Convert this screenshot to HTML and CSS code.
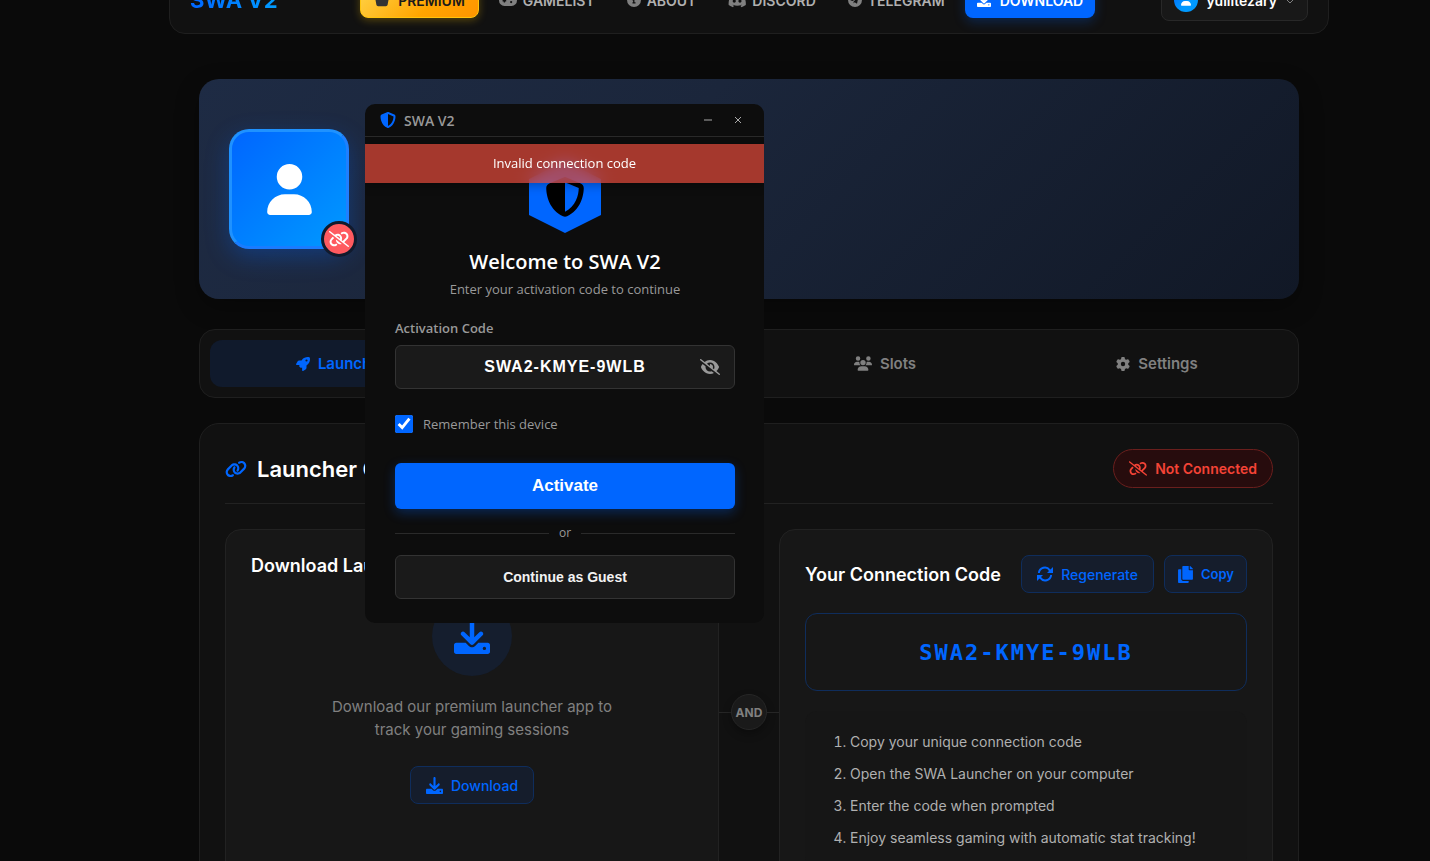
FILE: index.html
```html
<!DOCTYPE html>
<html lang="en">
<head>
<meta charset="utf-8">
<meta name="viewport" content="width=device-width, initial-scale=1">
<title>SWA V2</title>
<link rel="stylesheet" href="styles.css">
</head>
<body>
<svg class="sprite" aria-hidden="true">
  <symbol id="i-user" viewBox="0 0 448 512"><path d="M224 256A128 128 0 1 0 224 0a128 128 0 1 0 0 256zm-45.7 48C79.8 304 0 383.8 0 482.3C0 498.7 13.3 512 29.7 512H418.3c16.4 0 29.7-13.3 29.7-29.7C448 383.8 368.2 304 269.7 304H178.3z"/></symbol>
  <symbol id="i-unlink" viewBox="0 0 640 512"><path d="M38.8 5.1C28.4-3.1 13.3-1.2 5.1 9.2S-1.2 34.7 9.2 42.9l592 464c10.4 8.2 25.5 6.3 33.7-4.1s6.3-25.5-4.1-33.7L489.3 358.2l90.5-90.5c56.5-56.5 56.5-148 0-204.5c-50-50-128.8-56.5-186.3-15.4l-1.6 1.1c-14.4 10.3-17.7 30.3-7.4 44.6s30.3 17.7 44.6 7.4l1.6-1.1c32.1-22.9 76-19.3 103.8 8.6c31.5 31.5 31.5 82.5 0 114l-96 96-31.9-25C430.9 239.6 420.1 175.1 377 132c-52.2-52.3-134.5-56.2-191.3-11.7L38.8 5.1zM239 162c30.1-14.9 67.7-9.9 92.8 15.3c20 20 27.5 48.3 21.7 74.5L239 162zM406.6 416.4L220.9 270c-2.1 39.8 12.2 80.1 42.2 110c38.9 38.9 94.4 51 143.6 36.3zm-290-228.5L60.2 244.3c-56.5 56.5-56.5 148 0 204.5c50 50 128.8 56.5 186.3 15.4l1.6-1.1c14.4-10.3 17.7-30.3 7.4-44.6s-30.3-17.7-44.6-7.4l-1.6 1.1c-32.1 22.9-76 19.3-103.8-8.6C74 372 74 321 105.5 289.5l61.8-61.8-50.6-39.9z"/></symbol>
  <symbol id="i-link" viewBox="0 0 640 512"><path d="M579.8 267.7c56.5-56.5 56.5-148 0-204.5c-50-50-128.8-56.5-186.3-15.4l-1.6 1.1c-14.4 10.3-17.7 30.3-7.4 44.6s30.3 17.7 44.6 7.4l1.6-1.1c32.1-22.9 76-19.3 103.8 8.6c31.5 31.5 31.5 82.5 0 114L422.3 334.8c-31.5 31.5-82.5 31.5-114 0c-27.9-27.9-31.5-71.8-8.6-103.8l1.1-1.6c10.3-14.4 6.9-34.4-7.4-44.6s-34.4-6.9-44.6 7.4l-1.1 1.6C206.5 251.2 213 330 263 380c56.5 56.5 148 56.5 204.5 0L579.8 267.7zM60.2 244.3c-56.5 56.5-56.5 148 0 204.5c50 50 128.8 56.5 186.3 15.4l1.6-1.1c14.4-10.3 17.7-30.3 7.4-44.6s-30.3-17.7-44.6-7.4l-1.6 1.1c-32.1 22.9-76 19.3-103.8-8.6C74 372 74 321 105.5 289.5L217.7 177.2c31.5-31.5 82.5-31.5 114 0c27.9 27.9 31.5 71.8 8.6 103.9l-1.1 1.6c-10.3 14.4-6.9 34.4 7.4 44.6s34.4 6.9 44.6-7.4l1.1-1.6C433.5 260.8 427 182 377 132c-56.5-56.5-148-56.5-204.5 0L60.2 244.3z"/></symbol>
  <symbol id="i-rocket" viewBox="0 0 512 512"><path d="M156.6 384.9L125.7 354c-8.5-8.5-11.5-20.8-7.7-32.2c3-8.9 7-20.5 11.8-33.8L24 288c-8.6 0-16.6-4.6-20.9-12.1s-4.2-16.7 .2-24.1l52.5-88.5c13-21.9 36.5-35.3 61.9-35.3l82.3 0c2.4-4 4.8-7.7 7.2-11.3C289.1-4.1 411.1-8.1 483.9 5.3c11.6 2.1 20.6 11.2 22.8 22.8c13.4 72.9 9.3 194.8-111.4 276.7c-3.5 2.4-7.3 4.8-11.3 7.2v82.3c0 25.4-13.4 49-35.3 61.9l-88.5 52.5c-7.4 4.4-16.6 4.5-24.1 .2s-12.1-12.2-12.1-20.9V380.8c-14.1 4.9-26.4 8.9-35.7 11.9c-11.2 3.6-23.4 .5-31.8-7.8zM384 168a40 40 0 1 0 0-80 40 40 0 1 0 0 80z"/></symbol>
  <symbol id="i-users" viewBox="0 0 640 512"><path d="M144 0a80 80 0 1 1 0 160A80 80 0 1 1 144 0zM512 0a80 80 0 1 1 0 160A80 80 0 1 1 512 0zM0 298.7C0 239.8 47.8 192 106.7 192h42.7c15.9 0 31 3.5 44.6 9.7c-1.3 7.2-1.9 14.7-1.9 22.3c0 38.2 16.8 72.5 43.3 96c-.2 0-.4 0-.7 0H21.3C9.6 320 0 310.4 0 298.7zM405.3 320c-.2 0-.4 0-.7 0c26.6-23.5 43.3-57.8 43.3-96c0-7.6-.7-15-1.9-22.3c13.6-6.3 28.7-9.7 44.6-9.7h42.7C592.2 192 640 239.8 640 298.7c0 11.8-9.6 21.3-21.3 21.3H405.3zM224 224a96 96 0 1 1 192 0 96 96 0 1 1 -192 0zM128 485.3C128 411.7 187.7 352 261.3 352H378.7C452.3 352 512 411.7 512 485.3c0 14.7-11.9 26.7-26.7 26.7H154.7c-14.7 0-26.7-11.9-26.7-26.7z"/></symbol>
  <symbol id="i-gear" viewBox="0 0 512 512"><path d="M495.9 166.6c3.2 8.7 .5 18.4-6.4 24.6l-43.3 39.4c1.1 8.3 1.7 16.8 1.7 25.4s-.6 17.1-1.7 25.4l43.3 39.4c6.9 6.2 9.6 15.9 6.4 24.6c-4.4 11.9-9.7 23.3-15.8 34.3l-4.7 8.1c-6.6 11-14 21.4-22.1 31.2c-5.9 7.2-15.7 9.6-24.5 6.8l-55.7-17.7c-13.4 10.3-28.2 18.9-44 25.4l-12.5 57.1c-2 9.1-9 16.3-18.2 17.8c-13.8 2.3-28 3.5-42.5 3.5s-28.7-1.2-42.5-3.5c-9.2-1.5-16.2-8.7-18.2-17.8l-12.5-57.1c-15.8-6.5-30.6-15.1-44-25.4L83.1 425.9c-8.8 2.8-18.6 .3-24.5-6.8c-8.1-9.8-15.5-20.2-22.1-31.2l-4.7-8.1c-6.1-11-11.4-22.4-15.8-34.3c-3.2-8.7-.5-18.4 6.4-24.6l43.3-39.4C64.6 273.1 64 264.6 64 256s.6-17.1 1.7-25.4L22.4 191.2c-6.9-6.2-9.6-15.9-6.4-24.6c4.4-11.9 9.7-23.3 15.8-34.3l4.7-8.1c6.6-11 14-21.4 22.1-31.2c5.9-7.2 15.7-9.6 24.5-6.8l55.7 17.7c13.4-10.3 28.2-18.9 44-25.4l12.5-57.1c2-9.1 9-16.3 18.2-17.8C227.3 1.2 241.5 0 256 0s28.7 1.2 42.5 3.5c9.2 1.5 16.2 8.7 18.2 17.8l12.5 57.1c15.8 6.5 30.6 15.1 44 25.4l55.7-17.7c8.8-2.8 18.6-.3 24.5 6.8c8.1 9.8 15.5 20.2 22.1 31.2l4.7 8.1c6.1 11 11.4 22.4 15.8 34.3zM256 336a80 80 0 1 0 0-160 80 80 0 1 0 0 160z"/></symbol>
  <symbol id="i-shield" viewBox="0 0 512 512"><path d="M256 0c4.6 0 9.2 1 13.4 2.9L457.7 82.8c22 9.3 38.4 31 38.3 57.2c-.5 99.2-41.3 280.7-213.6 363.2c-16.7 8-36.1 8-52.8 0C57.3 420.7 16.5 239.2 16 140c-.1-26.2 16.3-47.9 38.3-57.2L242.7 2.9C246.8 1 251.4 0 256 0zm0 66.8V444.8C394 378 431.1 230.1 432 141.4L256 66.8z"/></symbol>
  <symbol id="i-rotate" viewBox="0 0 16 16"><path d="M16 1v6h-6l2-2a5 5 0 0 0-9.200 2H.9A7 7 0 0 1 13.500 3.400zM0 15V9h6l-2 2a5 5 0 0 0 9.200-2h1.900A7 7 0 0 1 2.500 12.600z"/></symbol>
  <symbol id="i-copy" viewBox="0 0 448 512"><path d="M320 448v40c0 13.255-10.745 24-24 24H24c-13.255 0-24-10.745-24-24V120c0-13.255 10.745-24 24-24h72v296c0 30.879 25.121 56 56 56h168zm0-344V0H152c-13.255 0-24 10.745-24 24v368c0 13.255 10.745 24 24 24h272c13.255 0 24-10.745 24-24V128H344c-13.2 0-24-10.8-24-24zm120.971-31.029L375.029 7.029A24 24 0 0 0 358.059 0H352v96h96v-6.059a24 24 0 0 0-7.029-16.97z"/></symbol>
  <symbol id="i-eye-off" viewBox="0 0 640 512"><path d="M38.8 5.1C28.4-3.1 13.3-1.2 5.1 9.2S-1.2 34.7 9.2 42.9l592 464c10.4 8.2 25.5 6.3 33.7-4.1s6.3-25.5-4.1-33.7L525.6 386.7c39.6-40.6 66.4-86.1 79.9-118.4c3.3-7.9 3.3-16.7 0-24.6c-14.9-35.7-46.2-87.7-93-131.1C465.5 68.8 400.8 32 320 32c-68.2 0-125 26.3-169.3 60.8L38.8 5.1zM223.1 149.5C248.6 126.2 282.7 112 320 112c79.5 0 144 64.5 144 144c0 24.9-6.3 48.3-17.4 68.7L408 294.5c8.4-19.3 10.6-41.4 4.8-63.3c-11.1-41.5-47.8-69.4-88.6-71.1c-5.8-.2-9.2 6.1-7.4 11.7c2.1 6.4 3.3 13.2 3.3 20.3c0 10.2-2.4 19.8-6.6 28.3l-90.3-70.8zM373 389.9c-16.4 6.5-34.3 10.1-53 10.1c-79.5 0-144-64.5-144-144c0-6.9 .5-13.6 1.4-20.2L83.1 161.5C60.3 191.2 44 220.8 34.5 243.7c-3.3 7.9-3.3 16.7 0 24.6c14.9 35.7 46.2 87.7 93 131.1C174.5 443.2 239.2 480 320 480c47.8 0 89.9-12.9 126.2-32.5L373 389.9z"/></symbol>
  <symbol id="i-download" viewBox="0 0 512 512"><path d="M288 32c0-17.700-14.300-32-32-32s-32 14.300-32 32V274.700l-73.400-73.400c-12.500-12.500-32.800-12.500-45.300 0s-12.500 32.800 0 45.300l128 128c12.500 12.500 32.800 12.500 45.300 0l128-128c12.500-12.500 12.500-32.800 0-45.300s-32.800-12.500-45.300 0L288 274.700V32zM32 352c-18 0-32 14-32 32v96c0 18 14 32 32 32H480c18 0 32-14 32-32V384c0-18-14-32-32-32H346.500l-45.300 45.300c-25 25-65.500 25-90.500 0L165.500 352H32zm400 56a24 24 0 1 1 0 48 24 24 0 1 1 0-48z"/></symbol>
  <symbol id="i-crown" viewBox="0 0 576 512"><path d="M309 106c11-7 19-19 19-34a40 40 0 1 0-80 0c0 15 8 27 19 34l-57 115c-9 18-33 23-49 11L72 160a40 40 0 1 0-32 16l46 252c5 30 32 52 63 52h278c31 0 58-22 63-52l46-252a40 40 0 1 0-32-16l-89 72c-16 12-40 7-49-11z"/></symbol>
  <symbol id="i-gamepad" viewBox="0 0 640 512"><path fill-rule="evenodd" d="M192 64a192 192 0 0 0 0 384h256a192 192 0 0 0 0-384zM168 200h48v40h40v48h-40v40h-48v-40h-40v-48h40zM432 272a40 40 0 1 0 0 80 40 40 0 1 0 0-80zM496 160a40 40 0 1 0 0 80 40 40 0 1 0 0-80z"/></symbol>
  <symbol id="i-info" viewBox="0 0 512 512"><path fill-rule="evenodd" d="M256 512a256 256 0 1 0 0-512 256 256 0 1 0 0 512zM200 336h24v-64h-24v-48h72v112h40v48H200zM256 128a32 32 0 1 1 0 64 32 32 0 1 1 0-64z"/></symbol>
  <symbol id="i-discord" viewBox="0 0 640 512"><path fill-rule="evenodd" d="M525 70c-40-18-82-31-127-39l-17 34c-42-6-82-6-123 0l-17-34c-44 8-86 21-126 39C35 189 13 305 24 420c53 39 105 63 155 78l34-54-52-25 13-10c100 46 208 46 308 0l13 10-53 25 35 54c50-15 102-39 155-78 13-133-22-248-107-350zM222 338c-30 0-55-28-55-62s24-61 55-61 56 28 55 61c0 34-24 62-55 62zm203 0c-30 0-55-28-55-62s24-61 55-61 56 28 55 61c0 34-24 62-55 62z"/></symbol>
  <symbol id="i-telegram" viewBox="0 0 512 512"><path fill-rule="evenodd" d="M256 0a256 256 0 1 0 0 512 256 256 0 1 0 0-512zM375 174l-42 198c-3 14-12 17-23 11l-64-47-31 30c-4 4-7 7-13 7l4-66 119-107c5-5-1-7-8-3L170 290l-63-20c-14-4-14-14 3-20l246-95c12-4 22 3 19 19z"/></symbol>
</svg>

<div class="page">
  <header class="topbar">
    <a class="logo" href="#">SWA V2</a>
    <nav class="nav">
      <a class="nav-link premium" href="#"><svg class="ico w16"><use href="#i-crown"/></svg>PREMIUM</a>
      <a class="nav-link" href="#"><svg class="ico w18"><use href="#i-gamepad"/></svg>GAMELIST</a>
      <a class="nav-link" href="#"><svg class="ico w14"><use href="#i-info"/></svg>ABOUT</a>
      <a class="nav-link" href="#"><svg class="ico w18"><use href="#i-discord"/></svg>DISCORD</a>
      <a class="nav-link" href="#"><svg class="ico w14"><use href="#i-telegram"/></svg>TELEGRAM</a>
      <a class="nav-link primary" href="#"><svg class="ico w14"><use href="#i-download"/></svg>DOWNLOAD</a>
    </nav>
    <button class="user-menu" type="button">
      <span class="user-pic"><svg class="ico w10"><use href="#i-user"/></svg></span>
      yuliitezary
      <svg class="chevron" viewBox="0 0 10 10"><path d="M2 5l3 3 3-3"/></svg>
    </button>
  </header>

  <main class="content">
    <section class="hero">
      <div class="avatar">
        <svg class="avatar-icon"><use href="#i-user"/></svg>
        <span class="avatar-badge"><svg class="ico w20"><use href="#i-unlink"/></svg></span>
      </div>
    </section>

    <div class="tabs">
      <button class="tab tab-launcher active" type="button"><svg class="ico w14"><use href="#i-rocket"/></svg>Launcher</button>
      <button class="tab tab-slots" type="button"><svg class="ico w18"><use href="#i-users"/></svg>Slots</button>
      <button class="tab tab-settings" type="button"><svg class="ico w14"><use href="#i-gear"/></svg>Settings</button>
    </div>

    <section class="panel">
      <div class="panel-head">
        <h2 class="panel-title"><svg class="ico w22"><use href="#i-link"/></svg>Launcher Connection</h2>
        <span class="status"><svg class="ico w18"><use href="#i-unlink"/></svg>Not Connected</span>
      </div>
      <div class="steps">
        <article class="card">
          <h3 class="card-title">Download Launcher</h3>
          <div class="get-app">
            <span class="round"><svg class="round-icon"><use href="#i-download"/></svg></span>
            <p class="get-text">Download our premium launcher app to track your gaming sessions</p>
            <a class="btn-soft" href="#"><svg class="ico w17"><use href="#i-download"/></svg>Download</a>
          </div>
        </article>
        <div class="joint"><span class="joint-label">AND</span></div>
        <article class="card">
          <div class="code-head">
            <h3 class="card-title">Your Connection Code</h3>
            <div class="code-actions">
              <button class="btn-soft" type="button"><svg class="ico w16"><use href="#i-rotate"/></svg>Regenerate</button>
              <button class="btn-soft slim" type="button"><svg class="ico w17"><use href="#i-copy"/></svg>Copy</button>
            </div>
          </div>
          <div class="code-box">SWA2-KMYE-9WLB</div>
          <ol class="howto">
            <li>Copy your unique connection code</li>
            <li>Open the SWA Launcher on your computer</li>
            <li>Enter the code when prompted</li>
            <li>Enjoy seamless gaming with automatic stat tracking!</li>
          </ol>
        </article>
      </div>
    </section>
  </main>
</div>

<div class="window" role="dialog" aria-labelledby="win-title">
  <div class="win-bar">
    <svg class="ico w16 blue"><use href="#i-shield"/></svg>
    <span class="win-name">SWA V2</span>
    <button class="win-btn" type="button" aria-label="Minimize"><svg viewBox="0 0 10 10"><path d="M1 5h8"/></svg></button>
    <button class="win-btn" type="button" aria-label="Close"><svg viewBox="0 0 10 10"><path d="M2 2l6 6M8 2l-6 6"/></svg></button>
  </div>
  <form class="win-body">
    <div class="hex"><svg class="hex-icon"><use href="#i-shield"/></svg></div>
    <h1 class="win-title" id="win-title">Welcome to SWA V2</h1>
    <p class="win-sub">Enter your activation code to continue</p>
    <label class="field-label" for="code">Activation Code</label>
    <div class="field">
      <input class="field-input" id="code" type="text" value="SWA2-KMYE-9WLB">
      <button class="field-eye" type="button" aria-label="Hide code"><svg class="ico w20"><use href="#i-eye-off"/></svg></button>
    </div>
    <label class="remember" for="remember"><input class="check" id="remember" type="checkbox" checked>Remember this device</label>
    <button class="btn-main" type="button">Activate</button>
    <div class="or">or</div>
    <button class="btn-guest" type="button">Continue as Guest</button>
  </form>
  <div class="alert" role="alert">Invalid connection code</div>
</div>
</body>
</html>
```

FILE: styles.css
```css
* { box-sizing: border-box; }

html { overflow: hidden; }

body {
  margin: 0;
  height: 100vh;
  overflow: hidden;
  background: #0a0a0a;
  color: #fff;
  font-family: Inter, "Liberation Sans", sans-serif;
}

h1, h2, h3, p, ol { margin: 0; }

a { color: inherit; text-decoration: none; }

button, input { font: inherit; color: inherit; }

button { padding: 0; border: 0; background: none; }

.sprite { position: absolute; width: 0; height: 0; }

.ico { flex: none; fill: currentColor; }
.w10 { width: 10px; height: 12px; }
.w14 { width: 14px; height: 14px; }
.w16 { width: 16px; height: 16px; }
.w17 { width: 17px; height: 17px; }
.w18 { width: 18px; height: 15px; }
.w20 { width: 20px; height: 16px; }
.w22 { width: 22px; height: 18px; }
.blue { color: #0066ff; }

.page { padding-left: 68px; }

/* Navigation bar, scrolled half out of view */
.topbar {
  display: flex;
  align-items: center;
  justify-content: space-between;
  max-width: 1160px;
  height: 68px;
  margin: -34px auto 0;
  padding: 0 20px;
  background: #111;
  border: 1px solid #1f1f1f;
  border-radius: 16px;
}

.logo {
  min-width: 104px;
  font-size: 22px;
  font-weight: 700;
  background: linear-gradient(90deg, #0066ff, #0099ff 80%);
  background-clip: text;
  color: transparent;
}

.nav { display: flex; align-items: center; gap: 8px; }

.nav-link {
  display: flex;
  align-items: center;
  gap: 6px;
  height: 36px;
  padding: 0 12px;
  border-radius: 8px;
  font-size: 14px;
  font-weight: 600;
  color: #b0b0b0;
}
.nav-link .ico { color: #808080; }

.premium {
  padding: 0 13px;
  gap: 8px;
  background: linear-gradient(135deg, #ffd54a, #ffa500 60%, #ff9500);
  border: 1px solid #ffc40c;
  color: #1a1a1a;
  box-shadow: 0 2px 8px rgba(255, 200, 0, .3);
}
.premium .ico { color: #333; }

.primary {
  gap: 9px;
  background: #0066ff;
  color: #fff;
  box-shadow: 0 4px 12px rgba(0, 102, 255, .25);
}
.primary .ico { color: #fff; }

.user-menu {
  display: flex;
  align-items: center;
  gap: 8px;
  height: 42px;
  padding: 0 12px;
  background: #181818;
  border: 1px solid #282828;
  border-radius: 8px;
  font-size: 14px;
  font-weight: 600;
}

.user-pic {
  display: grid;
  place-items: center;
  width: 24px;
  height: 24px;
  border-radius: 50%;
  background: linear-gradient(135deg, #0066ff, #0099ff 60%);
}

.chevron { width: 10px; height: 10px; fill: none; stroke: #808080; stroke-width: 1; }

.content { max-width: 1100px; margin: 45px auto 0; }

.hero {
  padding: 50px 30px;
  background: linear-gradient(135deg, #1e2b44, #1b263b 40%, #111826);
  border-radius: 20px;
  box-shadow: 0 8px 24px rgba(0, 0, 0, .3);
}

.avatar {
  position: relative;
  display: grid;
  place-items: center;
  width: 120px;
  height: 120px;
  border: 3px solid #1f92ff;
  border-right-color: #1f80ff;
  border-bottom-color: #1a7cff;
  border-radius: 20px;
  background: linear-gradient(135deg, #0066ff, #0099ff);
  box-shadow: 0 8px 24px rgba(0, 102, 255, .3);
}

.avatar-icon { width: 45px; height: 51px; fill: #fff; }

.avatar-badge {
  position: absolute;
  right: -11px;
  bottom: -11px;
  display: grid;
  place-items: center;
  width: 36px;
  height: 36px;
  border: 3px solid #111a2c;
  border-radius: 50%;
  background: #ff5a5f;
}

.tabs {
  display: grid;
  grid-template-columns: repeat(4, 1fr);
  gap: 10px;
  margin-top: 30px;
  padding: 10px;
  background: #111;
  border: 1px solid #1f1f1f;
  border-radius: 16px;
}

.tab {
  display: flex;
  align-items: center;
  justify-content: center;
  gap: 8px;
  height: 47px;
  border-radius: 12px;
  font-size: 15px;
  font-weight: 600;
  color: #808080;
}
.tab-slots { grid-column: 3; }
.tab-settings { grid-column: 4; }
.tab.active { background: #101a2c; color: #0066ff; }

.panel {
  margin-top: 25px;
  padding: 25px;
  background: #111;
  border: 1px solid #1f1f1f;
  border-radius: 20px;
}

.panel-head {
  display: flex;
  align-items: center;
  justify-content: space-between;
  padding-bottom: 15px;
  border-bottom: 1px solid #222;
}

.panel-title {
  display: flex;
  align-items: center;
  gap: 10px;
  font-size: 22px;
  font-weight: 600;
}
.panel-title .ico { color: #0066ff; }

.status {
  display: flex;
  align-items: center;
  gap: 8px;
  height: 39px;
  padding: 0 15px;
  background: #270c0d;
  border: 1px solid #6a1f1d;
  border-radius: 20px;
  font-size: 14px;
  font-weight: 600;
  color: #f44336;
}

.steps {
  display: grid;
  grid-template-columns: 1fr 60px 1fr;
  margin-top: 25px;
}

.card {
  padding: 25px;
  background: #171717;
  border: 1px solid #222;
  border-radius: 16px;
}

.card-title { font-size: 18px; font-weight: 600; line-height: 21px; }

.get-app {
  display: flex;
  flex-direction: column;
  align-items: center;
  margin-top: 20px;
}

.round {
  display: grid;
  place-items: center;
  width: 80px;
  height: 80px;
  border-radius: 50%;
  background: #151e2e;
}
.round-icon { width: 36px; height: 36px; fill: #0066ff; }

.get-text {
  max-width: 300px;
  margin: 19px 0 25px;
  font-size: 15px;
  line-height: 23px;
  text-align: center;
  color: #808080;
}

.btn-soft {
  display: flex;
  align-items: center;
  gap: 8px;
  height: 38px;
  padding: 0 15px;
  background: #151d2c;
  border: 1px solid #0f2d5c;
  border-radius: 8px;
  font-size: 14px;
  font-weight: 500;
  color: #0066ff;
}
.slim { gap: 7px; padding: 0 12px; font-size: 13px; font-weight: 600; }

.joint {
  display: flex;
  align-items: center;
}
.joint::before, .joint::after { content: ""; flex: 1; height: 1px; background: #262626; }
.joint-label {
  display: grid;
  place-items: center;
  width: 36px;
  height: 36px;
  background: #1a1a1a;
  border: 1px solid #262626;
  border-radius: 50%;
  font-size: 12px;
  font-weight: 700;
  color: #808080;
  box-shadow: 0 4px 8px rgba(0, 0, 0, .3);
}

.code-head { display: flex; align-items: center; justify-content: space-between; }
.code-actions { display: flex; gap: 10px; }

.code-box {
  display: grid;
  place-items: center;
  height: 78px;
  margin-top: 20px;
  border: 1px solid #0f2d5c;
  border-radius: 12px;
  font-family: "DejaVu Sans Mono", monospace;
  font-size: 22px;
  font-weight: 700;
  letter-spacing: 2px;
  color: #0066ff;
}

.howto {
  display: flex;
  flex-direction: column;
  gap: 10px;
  margin-top: 20px;
  padding: 20px 20px 20px 45px;
  border-radius: 12px;
  background: #161616;
  font-size: 14px;
  line-height: 22px;
  color: #b0b0b0;
}

/* Launcher window floating over the page */
.window {
  position: absolute;
  top: 104px;
  left: 365px;
  width: 399px;
  overflow: hidden;
  background: #0d0d0d;
  border-radius: 10px;
  font-family: "Open Sans", "Noto Sans", sans-serif;
}

.win-bar {
  display: flex;
  align-items: center;
  height: 33px;
  padding: 0 11px 0 15px;
  border-bottom: 1px solid #2a2a2a;
}
.win-name { flex: 1; margin-left: 8px; font-size: 14px; font-weight: 600; color: #999; }
.win-btn { display: grid; place-items: center; width: 30px; height: 30px; }
.win-btn svg { width: 10px; height: 10px; fill: none; stroke: #aaa; stroke-width: 1; }

.win-body {
  display: flex;
  flex-direction: column;
  padding: 24px 29px 24px 30px;
}

.hex {
  display: grid;
  place-items: center;
  align-self: center;
  width: 72px;
  height: 72px;
  background: #0066ff;
  clip-path: polygon(50% 0, 100% 25%, 100% 75%, 50% 100%, 0 75%, 0 25%);
}
.hex-icon { width: 40px; height: 40px; fill: #000; }

.win-title {
  margin-top: 15px;
  font-size: 20px;
  line-height: 28px;
  font-weight: 600;
  text-align: center;
}

.win-sub {
  margin-top: 4px;
  font-size: 13px;
  line-height: 18px;
  text-align: center;
  color: #999;
}

.field-label {
  margin-top: 20px;
  font-size: 13px;
  line-height: 20px;
  font-weight: 600;
  color: #999;
}

.field { position: relative; margin-top: 7px; }

.field-input {
  display: block;
  width: 100%;
  height: 44px;
  padding: 0 40px;
  background: #1a1a1a;
  border: 1px solid #333;
  border-radius: 6px;
  font-family: "Liberation Sans", sans-serif;
  font-size: 16px;
  font-weight: 700;
  letter-spacing: 1px;
  text-align: center;
}

.field-eye {
  position: absolute;
  top: 0;
  right: 15px;
  display: grid;
  place-items: center;
  height: 44px;
  color: #999;
}

.remember {
  display: flex;
  align-items: center;
  gap: 10px;
  margin-top: 25px;
  font-size: 13px;
  line-height: 20px;
  color: #999;
}

.check { width: 18px; height: 18px; margin: 0; accent-color: #0066ff; }

.btn-main {
  height: 46px;
  margin-top: 29px;
  background: #0066ff;
  border-radius: 6px;
  font-family: "Liberation Sans", sans-serif;
  font-size: 17px;
  font-weight: 700;
  box-shadow: 0 4px 12px rgba(0, 102, 255, .3);
}

.or {
  display: flex;
  align-items: center;
  gap: 10px;
  margin: 15px 0 13px;
  font-size: 12px;
  line-height: 18px;
  color: #999;
}
.or::before, .or::after { content: ""; flex: 1; height: 1px; background: #2a2a2a; }

.btn-guest {
  height: 44px;
  background: #1a1a1a;
  border: 1px solid #333;
  border-radius: 6px;
  font-family: "Liberation Sans", sans-serif;
  font-size: 14px;
  font-weight: 700;
  color: #f2f2f2;
}

.alert {
  position: absolute;
  top: 40px;
  left: 0;
  right: 0;
  padding: 10px;
  background: rgba(231, 76, 60, .7);
  backdrop-filter: blur(8px);
  box-shadow: 0 2px 10px rgba(0, 0, 0, .3);
  font-size: 13px;
  line-height: 19px;
  text-align: center;
}
```
